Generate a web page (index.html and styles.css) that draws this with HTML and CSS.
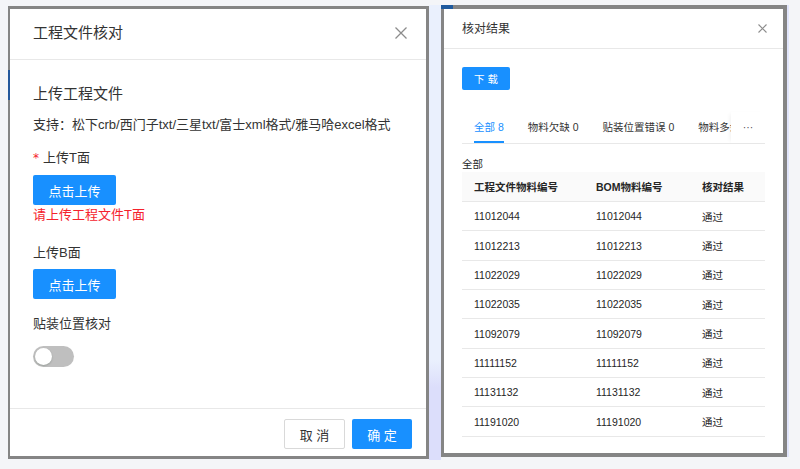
FILE: index.html
```html
<!DOCTYPE html>
<html lang="zh-CN">
<head>
<meta charset="utf-8">
<title>工程文件核对</title>
<link rel="stylesheet" href="styles.css">
</head>
<body>
<div class="stage">
  <section class="dlg dlg-left">
    <header class="lhead">
      <h1 class="ltitle">工程文件核对</h1>
      <span class="close close-l" aria-label="关闭">
        <svg width="12" height="12" viewBox="0 0 12 12"><path d="M0.5 0.5L11.5 11.5M11.5 0.5L0.5 11.5" stroke="#8c8c8c" stroke-width="1.3" fill="none"/></svg>
      </span>
    </header>
    <div class="lbody">
      <h2 class="sect">上传工程文件</h2>
      <p class="hint">支持：松下crb/西门子txt/三星txt/富士xml格式/雅马哈excel格式</p>
      <div class="lbl lbl-t"><span class="req">*</span>上传T面</div>
      <button class="btn btn-primary upload up-t">点击上传</button>
      <div class="err">请上传工程文件T面</div>
      <div class="lbl lbl-b">上传B面</div>
      <button class="btn btn-primary upload up-b">点击上传</button>
      <div class="lbl lbl-s">贴装位置核对</div>
      <span class="switch"><span class="knob"></span></span>
    </div>
    <footer class="lfoot">
      <button class="btn btn-default fbtn">取 消</button>
      <button class="btn btn-primary fbtn">确 定</button>
    </footer>
  </section>

  <div class="gap"></div>

  <section class="dlg dlg-right">
    <header class="rhead">
      <h1 class="rtitle">核对结果</h1>
      <span class="close close-r" aria-label="关闭">
        <svg width="9" height="9" viewBox="0 0 9 9"><path d="M0.5 0.5L8.5 8.5M8.5 0.5L0.5 8.5" stroke="#8c8c8c" stroke-width="1.1" fill="none"/></svg>
      </span>
    </header>
    <div class="rbody">
      <button class="btn btn-primary dl">下 载</button>
      <nav class="tabs">
        <div class="tablist">
          <span class="tab active">全部 8</span>
          <span class="tab">物料欠缺 0</span>
          <span class="tab">贴装位置错误 0</span>
          <span class="tab">物料多余 0</span>
        </div>
        <span class="more">···</span>
      </nav>
      <div class="cap">全部</div>
      <div class="table">
        <div class="tr th"><span>工程文件物料编号</span><span>BOM物料编号</span><span>核对结果</span></div>
        <div class="tr"><span>11012044</span><span>11012044</span><span>通过</span></div>
        <div class="tr"><span>11012213</span><span>11012213</span><span>通过</span></div>
        <div class="tr"><span>11022029</span><span>11022029</span><span>通过</span></div>
        <div class="tr"><span>11022035</span><span>11022035</span><span>通过</span></div>
        <div class="tr"><span>11092079</span><span>11092079</span><span>通过</span></div>
        <div class="tr"><span>11111152</span><span>11111152</span><span>通过</span></div>
        <div class="tr"><span>11131132</span><span>11131132</span><span>通过</span></div>
        <div class="tr"><span>11191020</span><span>11191020</span><span>通过</span></div>
      </div>
    </div>
  </section>
</div>
</body>
</html>
```

FILE: styles.css
```css
* { box-sizing: border-box; }
html, body { margin: 0; padding: 0; }
body {
  width: 800px;
  height: 469px;
  overflow: hidden;
  background: #f4f5f8;
  font-family: "Liberation Sans", "Noto Sans CJK SC", sans-serif;
  color: #333;
}
h1, h2, p { margin: 0; font-weight: 400; }

.stage {
  display: flex;
  align-items: flex-start;
  padding: 5px 0 0 8px;
}

.dlg {
  position: relative;
  background: #fff;
  border: 3px solid #858585;
  display: flex;
  flex-direction: column;
}

/* ---------- left dialog ---------- */
.dlg-left {
  width: 421px;
  height: 453px;
  margin-top: 1px;
  border-left-width: 2px;
}
.dlg-left::before {
  content: "";
  position: absolute;
  left: -2px;
  top: 61px;
  width: 2px;
  height: 30px;
  background: #24589c;
}
.lhead {
  height: 51px;
  flex: none;
  border-bottom: 1px solid #e8e8e8;
  display: flex;
  align-items: center;
  justify-content: space-between;
  padding: 0 19px 2px 23px;
}
.ltitle { font-size: 15px; line-height: 22px; color: #333; }
.close { display: flex; align-items: center; justify-content: center; }

.lbody {
  flex: 1;
  display: flex;
  flex-direction: column;
  align-items: flex-start;
  padding: 23px 23px 0 23px;
}
.sect { font-size: 15px; line-height: 22px; color: #333; }
.hint { font-size: 13px; line-height: 20px; margin-top: 10px; color: #333; }
.lbl { font-size: 13px; line-height: 20px; color: #333; }
.lbl-t { margin-top: 13px; }
.lbl-b { margin-top: 18px; }
.lbl-s { margin-top: 15px; }
.req { color: #f5222d; margin-right: 4px; font-family: "DejaVu Sans", sans-serif; font-size: 12px; }
.err { font-size: 13px; line-height: 20px; color: #f5222d; }

.btn {
  font-family: inherit;
  border: 0;
  padding: 0;
  margin: 0;
  border-radius: 2px;
  cursor: pointer;
  display: inline-flex;
  align-items: center;
  justify-content: center;
}
.btn-primary { background: #1890ff; color: #fff; }
.btn-default { background: #fff; color: #333; border: 1px solid #d9d9d9; }

.upload { width: 83px; height: 30px; font-size: 13px; }
.up-t { margin-top: 7px; }
.up-b { margin-top: 6px; }

.switch {
  margin-top: 12px;
  width: 41px;
  height: 21px;
  border-radius: 11px;
  background: #bfbfbf;
  display: flex;
  align-items: center;
  padding-left: 2px;
}
.knob {
  width: 17px;
  height: 17px;
  border-radius: 50%;
  background: #fff;
  box-shadow: 0 1px 2px rgba(0, 35, 11, 0.2);
}

.lfoot {
  height: 48px;
  flex: none;
  border-top: 1px solid #e8e8e8;
  display: flex;
  justify-content: flex-end;
  align-items: flex-start;
  gap: 7px;
  padding: 10px 14px 0 0;
}
.fbtn { height: 30px; font-size: 13px; }
.fbtn.btn-default { width: 61px; }
.fbtn.btn-primary { width: 60px; }

/* ---------- gap ---------- */
.gap {
  width: 12px;
  height: 455px;
  flex: none;
  background: linear-gradient(#eaf0fd 0%, #eaf0fd 78%, #dcdefb 84%, #dcdefb 100%);
}

/* ---------- right dialog ---------- */
.dlg-right {
  width: 346px;
  height: 452px;
  border-width: 4px 4px 4px 3px;
  box-shadow: 2px 0 0 #e1e5fb;
}
.dlg-right::before {
  content: "";
  position: absolute;
  left: -3px;
  top: -4px;
  width: 12px;
  height: 4px;
  background: #1f5a9e;
}
.rhead {
  height: 40px;
  flex: none;
  border-bottom: 1px solid #e8e8e8;
  display: flex;
  align-items: center;
  justify-content: space-between;
  padding: 0 16px 0 18px;
}
.rtitle { font-size: 12px; line-height: 18px; color: #333; }

.rbody {
  flex: 1;
  padding: 18px 18px 0 18px;
  display: flex;
  flex-direction: column;
  align-items: flex-start;
}
.dl { width: 48px; height: 23px; font-size: 10.5px; }

.tabs {
  margin-top: 22px;
  width: 100%;
  height: 32px;
  border-bottom: 1px solid #e8e8e8;
  display: flex;
}
.tablist {
  width: 269px;
  overflow: hidden;
  display: flex;
  gap: 24px;
  padding-left: 12px;
  white-space: nowrap;
}
.tab {
  position: relative;
  flex: none;
  font-size: 10.5px;
  line-height: 31px;
  color: #333;
}
.tab.active { color: #1890ff; }
.tab.active::after {
  content: "";
  position: absolute;
  left: 0;
  right: 0;
  bottom: 0;
  height: 2px;
  background: #1890ff;
}
.more {
  flex: 1;
  font-size: 10.5px;
  line-height: 31px;
  color: #555;
  text-align: center;
  box-shadow: -3px 0 4px -2px rgba(0, 0, 0, 0.06);
}

.cap { margin-top: 12px; font-size: 10.5px; line-height: 16px; color: #262626; }

.table { width: 100%; }
.tr {
  display: grid;
  grid-template-columns: 122px 106px 1fr;
  height: 29.35px;
  border-bottom: 1px solid #e8e8e8;
  align-items: center;
  font-size: 10.5px;
  color: #262626;
}
.tr span { padding-left: 12px; }
.tr.th {
  height: 30px;
  background: #fafafa;
  font-weight: 700;
}
```
